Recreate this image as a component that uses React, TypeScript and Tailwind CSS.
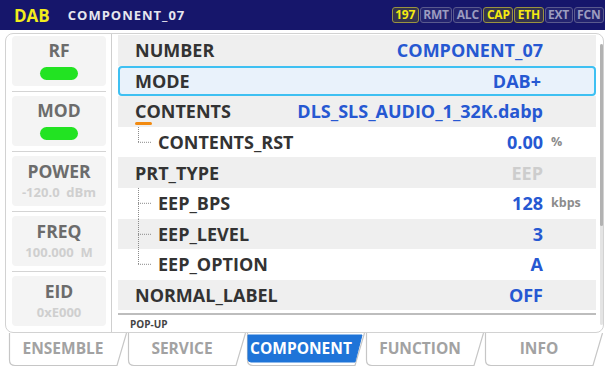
import React from "react";

type Row = {
  label: string;
  value: string;
  unit?: string;
  gray?: boolean;
  sel?: boolean;
  dim?: boolean;
  underline?: boolean;
  tree?: "first" | "mid" | "last";
};

const rows: Row[] = [
  { label: "NUMBER", value: "COMPONENT_07", gray: true },
  { label: "MODE", value: "DAB+", sel: true },
  { label: "CONTENTS", value: "DLS_SLS_AUDIO_1_32K.dabp", gray: true, underline: true },
  { label: "CONTENTS_RST", value: "0.00", unit: "%", tree: "last" },
  { label: "PRT_TYPE", value: "EEP", gray: true, dim: true },
  { label: "EEP_BPS", value: "128", unit: "kbps", tree: "first" },
  { label: "EEP_LEVEL", value: "3", gray: true, tree: "mid" },
  { label: "EEP_OPTION", value: "A", tree: "last" },
  { label: "NORMAL_LABEL", value: "OFF", gray: true },
];

const badges = [
  { t: "197", on: true },
  { t: "RMT", on: false },
  { t: "ALC", on: false },
  { t: "CAP", on: true },
  { t: "ETH", on: true },
  { t: "EXT", on: false },
  { t: "FCN", on: false },
];

const sideItems = [
  { label: "RF", led: true },
  { label: "MOD", led: true },
  { label: "POWER", sub: "-120.0  dBm" },
  { label: "FREQ", sub: "100.000  M" },
  { label: "EID", sub: "0xE000" },
];

const tabs = ["ENSEMBLE", "SERVICE", "COMPONENT", "FUNCTION", "INFO"];

function Tree({ kind }: { kind: "first" | "mid" | "last" }) {
  return (
    <svg width="40" height="100%" className="shrink-0 h-full">
      <line
        x1="20.5"
        y1="0"
        x2="20.5"
        y2={kind === "last" ? "50%" : "100%"}
        stroke="#8a8a8a"
        strokeWidth="1"
        strokeDasharray="1 1"
      />
      <line x1="20" y1="50%" x2="34" y2="50%" stroke="#8a8a8a" strokeWidth="1" strokeDasharray="1 1" />
    </svg>
  );
}

export default function App() {
  return (
    <div className="w-[605px] h-[370px] bg-white overflow-hidden flex flex-col font-['Open_Sans',sans-serif]">
      {/* header */}
      <div className="h-[30px] shrink-0 bg-[#16166b] flex items-center pl-[14px] pr-[1px]">
        <span className="text-[17px] font-bold text-[#f2ec1c] leading-none">DAB</span>
        <span className="ml-[18px] text-[13px] font-bold text-[#e6e6ef] tracking-[1px] leading-none">
          COMPONENT_07
        </span>
        <div className="ml-auto flex gap-[1px]">
          {badges.map((b) => (
            <div
              key={b.t}
              className={
                "h-[16px] px-[2.5px] flex items-center rounded-[3px] border-[1.5px] text-[12px] font-bold leading-none tracking-[-0.2px] " +
                (b.on
                  ? "border-[#9a9440] bg-[#35344f] text-[#f5ea10]"
                  : "border-[#5a5a8e] bg-[#23236f] text-[#9c9cc0]")
              }
            >
              {b.t}
            </div>
          ))}
        </div>
      </div>

      {/* main panel */}
      <div className="mt-[3px] ml-[5px] w-[599px] h-[300px] shrink-0 border border-[#d2d2d2] rounded-[8px] flex">
        {/* left column */}
        <div className="w-[105px] shrink-0 pl-[6px] pr-[5px] pt-[2px] flex flex-col">
          {sideItems.map((it, i) => (
            <div key={it.label} className="flex flex-col">
              {i > 0 && <div className="mt-[5px] mb-[4px] h-px bg-[#d4d4d4]" />}
              <div className="h-[50px] rounded-[4px] bg-[#f4f4f4] flex flex-col items-center justify-center">
                <span className="text-[17.5px] font-bold text-[#6c6c6c] leading-none">{it.label}</span>
                {it.led && <div className="mt-[8px] w-[38px] h-[13px] rounded-full bg-[#22e322]" />}
                {it.sub && (
                  <span className="mt-[6px] text-[13px] font-bold text-[#cfcfcf] leading-none whitespace-pre">
                    {it.sub}
                  </span>
                )}
              </div>
            </div>
          ))}
        </div>
        <div className="w-px shrink-0 bg-[#cfcfcf]" />

        {/* right list */}
        <div className="flex-1 flex pl-[6px]">
          <div className="w-[478px] flex flex-col pt-[1px]">
            {rows.map((r) => (
              <div
                key={r.label}
                className={
                  "h-[30.6px] shrink-0 flex items-center " +
                  (r.sel
                    ? "border-2 border-[#3ec0f2] rounded-[4px] bg-[#e9f2fb]"
                    : r.gray
                    ? "bg-[#efefef]"
                    : "bg-white")
                }
              >
                {r.tree ? (
                  <Tree kind={r.tree} />
                ) : (
                  <div className={r.sel ? "w-[15px] shrink-0" : "w-[17px] shrink-0"} />
                )}
                <span className="relative text-[18px] font-bold text-[#333333] leading-none">
                  {r.label}
                  {r.underline && (
                    <span className="absolute left-0 top-[20px] w-[17px] h-[3px] rounded-full bg-[#f28a10]" />
                  )}
                </span>
                <span
                  className={
                    "ml-auto text-[18px] font-bold leading-none " + (r.dim ? "text-[#cdcdcd]" : "text-[#2658d2]")
                  }
                >
                  {r.value}
                </span>
                <span className="w-[53px] shrink-0 pl-[8px] text-[12.5px] font-bold text-[#8c8c8c] leading-none">
                  {r.unit ?? ""}
                </span>
              </div>
            ))}
            <div className="mt-[3px] h-[2px] bg-[#bdbdbd]" />
            <div className="pl-[12px] pt-[4px] text-[10px] font-bold text-[#444444] leading-none">POP-UP</div>
          </div>
          {/* scrollbar */}
          <div className="ml-auto w-[3px] pt-[10px] pb-[7px] flex flex-col">
            <div className="flex-1 bg-[#e4e4e4] rounded-full flex flex-col">
              <div className="h-[182px] bg-[#b2b2b2] rounded-full" />
            </div>
          </div>
        </div>
      </div>

      {/* tabs */}
      <div className="flex pl-[8px]">
        {tabs.map((t) => {
          const active = t === "COMPONENT";
          return (
            <div key={t} className="relative w-[119px] h-[34px] flex items-center justify-center pr-[9px]">
              <svg className="absolute inset-0" width="119" height="34" viewBox="0 0 119 34">
                <path
                  d="M1.5,0 L1.5,27 Q1.5,32.5 7,32.5 L109,32.5 L118.5,0"
                  fill="#ffffff"
                  stroke="#c6c6c6"
                  strokeWidth="1.2"
                />
                {active && (
                  <path d="M2,2 L2,26 Q2,29 5,29 L109,29 L116,2 Z" fill="#1f74d8" stroke="#1f74d8" strokeWidth="1" />
                )}
              </svg>
              <span
                className={
                  "relative text-[15.5px] font-bold leading-none -mt-[3px] " +
                  (active ? "text-white" : "text-[#a2a2a2]")
                }
              >
                {t}
              </span>
            </div>
          );
        })}
      </div>
    </div>
  );
}
